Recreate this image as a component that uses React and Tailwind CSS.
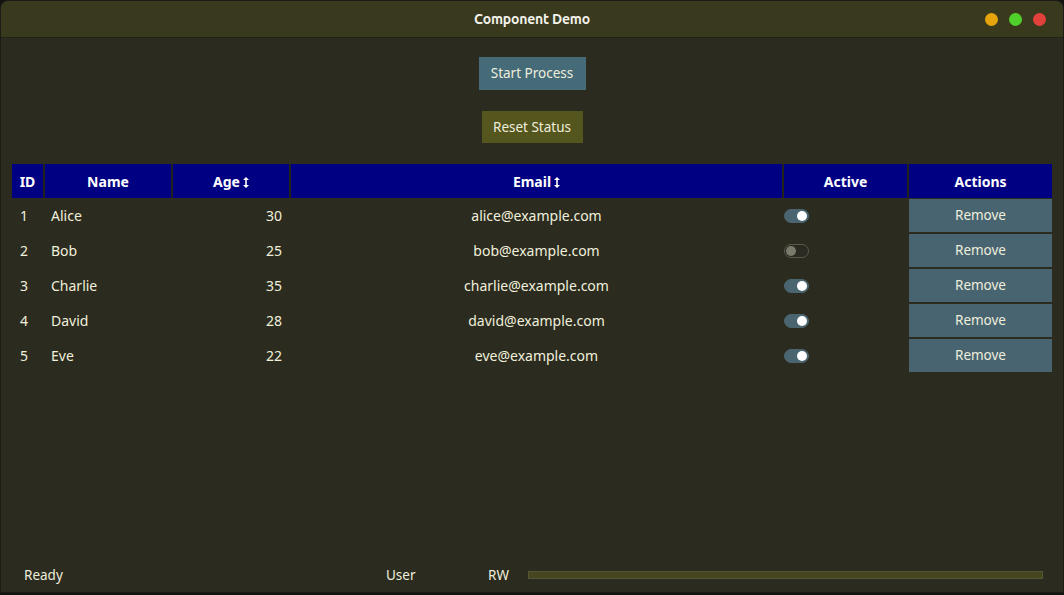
import { useState } from 'react';

const initialRows = [
  { id: 1, name: 'Alice', age: 30, email: 'alice@example.com', active: true },
  { id: 2, name: 'Bob', age: 25, email: 'bob@example.com', active: false },
  { id: 3, name: 'Charlie', age: 35, email: 'charlie@example.com', active: true },
  { id: 4, name: 'David', age: 28, email: 'david@example.com', active: true },
  { id: 5, name: 'Eve', age: 22, email: 'eve@example.com', active: true },
];

const SortIcon = () => (
  <svg width="6" height="11" viewBox="0 0 6 11" className="ml-[3px] inline-block">
    <path d="M3 0 L6 3 H3.8 V8 H6 L3 11 L0 8 H2.2 V3 H0 Z" fill="currentColor" />
  </svg>
);

const Toggle = ({ on, onClick }) => (
  <button
    onClick={onClick}
    className={`relative w-[25px] h-[14px] rounded-full border ${
      on ? 'bg-[#4a6470] border-[#4a6470]' : 'bg-[#2a2a22] border-[#5a5a4a]'
    }`}
  >
    <span
      className={`absolute top-[1px] w-[10px] h-[10px] rounded-full ${
        on ? 'right-[1px] bg-white' : 'left-[1px] bg-[#7a7a6a]'
      }`}
    />
  </button>
);

const App = () => {
  const [rows, setRows] = useState(initialRows);
  const [status, setStatus] = useState('Ready');

  const toggle = (id) =>
    setRows((prev) => prev.map((r) => (r.id === id ? { ...r, active: !r.active } : r)));

  const remove = (id) => setRows((prev) => prev.filter((r) => r.id !== id));

  return (
    <div
      className="w-[1064px] h-[595px] bg-[#141410] overflow-hidden"
      style={{ fontFamily: '"Noto Sans", "Open Sans", sans-serif' }}
    >
      <div className="w-full h-[593px] flex flex-col bg-[#2b2b1f] rounded-t-[8px] border border-[#1c1c16] overflow-hidden">
        {/* title bar */}
        <div className="h-[37px] shrink-0 bg-[#39391d] flex items-center relative border-b border-[#22221a]">
          <div className="flex-1 text-center text-[14px] font-bold text-[#f2f2ea] tracking-[-0.2px]" style={{ fontFamily: 'Ubuntu, "Noto Sans", sans-serif' }}>
            Component Demo
          </div>
          <div className="absolute right-[17px] top-[12px] flex gap-[11px]">
            <span className="w-[13px] h-[13px] rounded-full bg-[#e5a50a]" />
            <span className="w-[13px] h-[13px] rounded-full bg-[#4fd02a]" />
            <span className="w-[13px] h-[13px] rounded-full bg-[#e2403a]" />
          </div>
        </div>

        {/* actions */}
        <div className="flex flex-col items-center pt-[19px]">
          <button
            onClick={() => setStatus('Running')}
            className="w-[107px] h-[33px] bg-[#456a78] text-[#eeeedd] text-[13.5px]"
          >
            Start Process
          </button>
          <button
            onClick={() => setStatus('Ready')}
            className="mt-[21px] w-[101px] h-[32px] bg-[#55551e] text-[#eeeedd] text-[13.5px]"
          >
            Reset Status
          </button>
        </div>

        {/* table */}
        <div className="px-[11px] pt-[21px] flex-1">
          <table className="w-[1040px] border-collapse text-[14px] text-[#f0f0dc]">
            <colgroup>
              <col className="w-[32px]" />
              <col className="w-[128px]" />
              <col className="w-[118px]" />
              <col className="w-[493px]" />
              <col className="w-[125px]" />
              <col className="w-[144px]" />
            </colgroup>
            <thead>
              <tr className="h-[34px] bg-[#000082] text-white font-bold text-[14px]">
                <th className="border-r-2 border-[#22221a] font-bold">ID</th>
                <th className="border-r-2 border-[#22221a] font-bold">Name</th>
                <th className="border-r-2 border-[#22221a] font-bold">
                  Age<SortIcon />
                </th>
                <th className="border-r-2 border-[#22221a] font-bold">
                  Email<SortIcon />
                </th>
                <th className="border-r-2 border-[#22221a] font-bold">Active</th>
                <th className="font-bold">Actions</th>
              </tr>
            </thead>
            <tbody>
              {rows.map((r) => (
                <tr key={r.id} className="h-[35px]">
                  <td className="pl-[8px]">{r.id}</td>
                  <td className="pl-[7px]">{r.name}</td>
                  <td className="text-right pr-[8px]">{r.age}</td>
                  <td className="text-center">{r.email}</td>
                  <td className="pl-[1px] align-middle">
                    <div className="flex items-center">
                      <Toggle on={r.active} onClick={() => toggle(r.id)} />
                    </div>
                  </td>
                  <td className="pl-[1px] py-[1px]">
                    <button
                      onClick={() => remove(r.id)}
                      className="w-full h-[33px] bg-[#476470] text-[#eeeedd] text-[13.5px]"
                    >
                      Remove
                    </button>
                  </td>
                </tr>
              ))}
            </tbody>
          </table>
        </div>

        {/* status bar */}
        <div className="h-[32px] shrink-0 flex items-center text-[13.5px] text-[#eeeedd] pb-[2px]">
          <span className="pl-[23px] w-[385px]">{status}</span>
          <span className="w-[102px]">User</span>
          <span className="w-[40px]">RW</span>
          <div className="w-[515px] h-[8px] bg-[#45451e] border border-[#55553a]" />
        </div>
      </div>
    </div>
  );
};

export default App;
